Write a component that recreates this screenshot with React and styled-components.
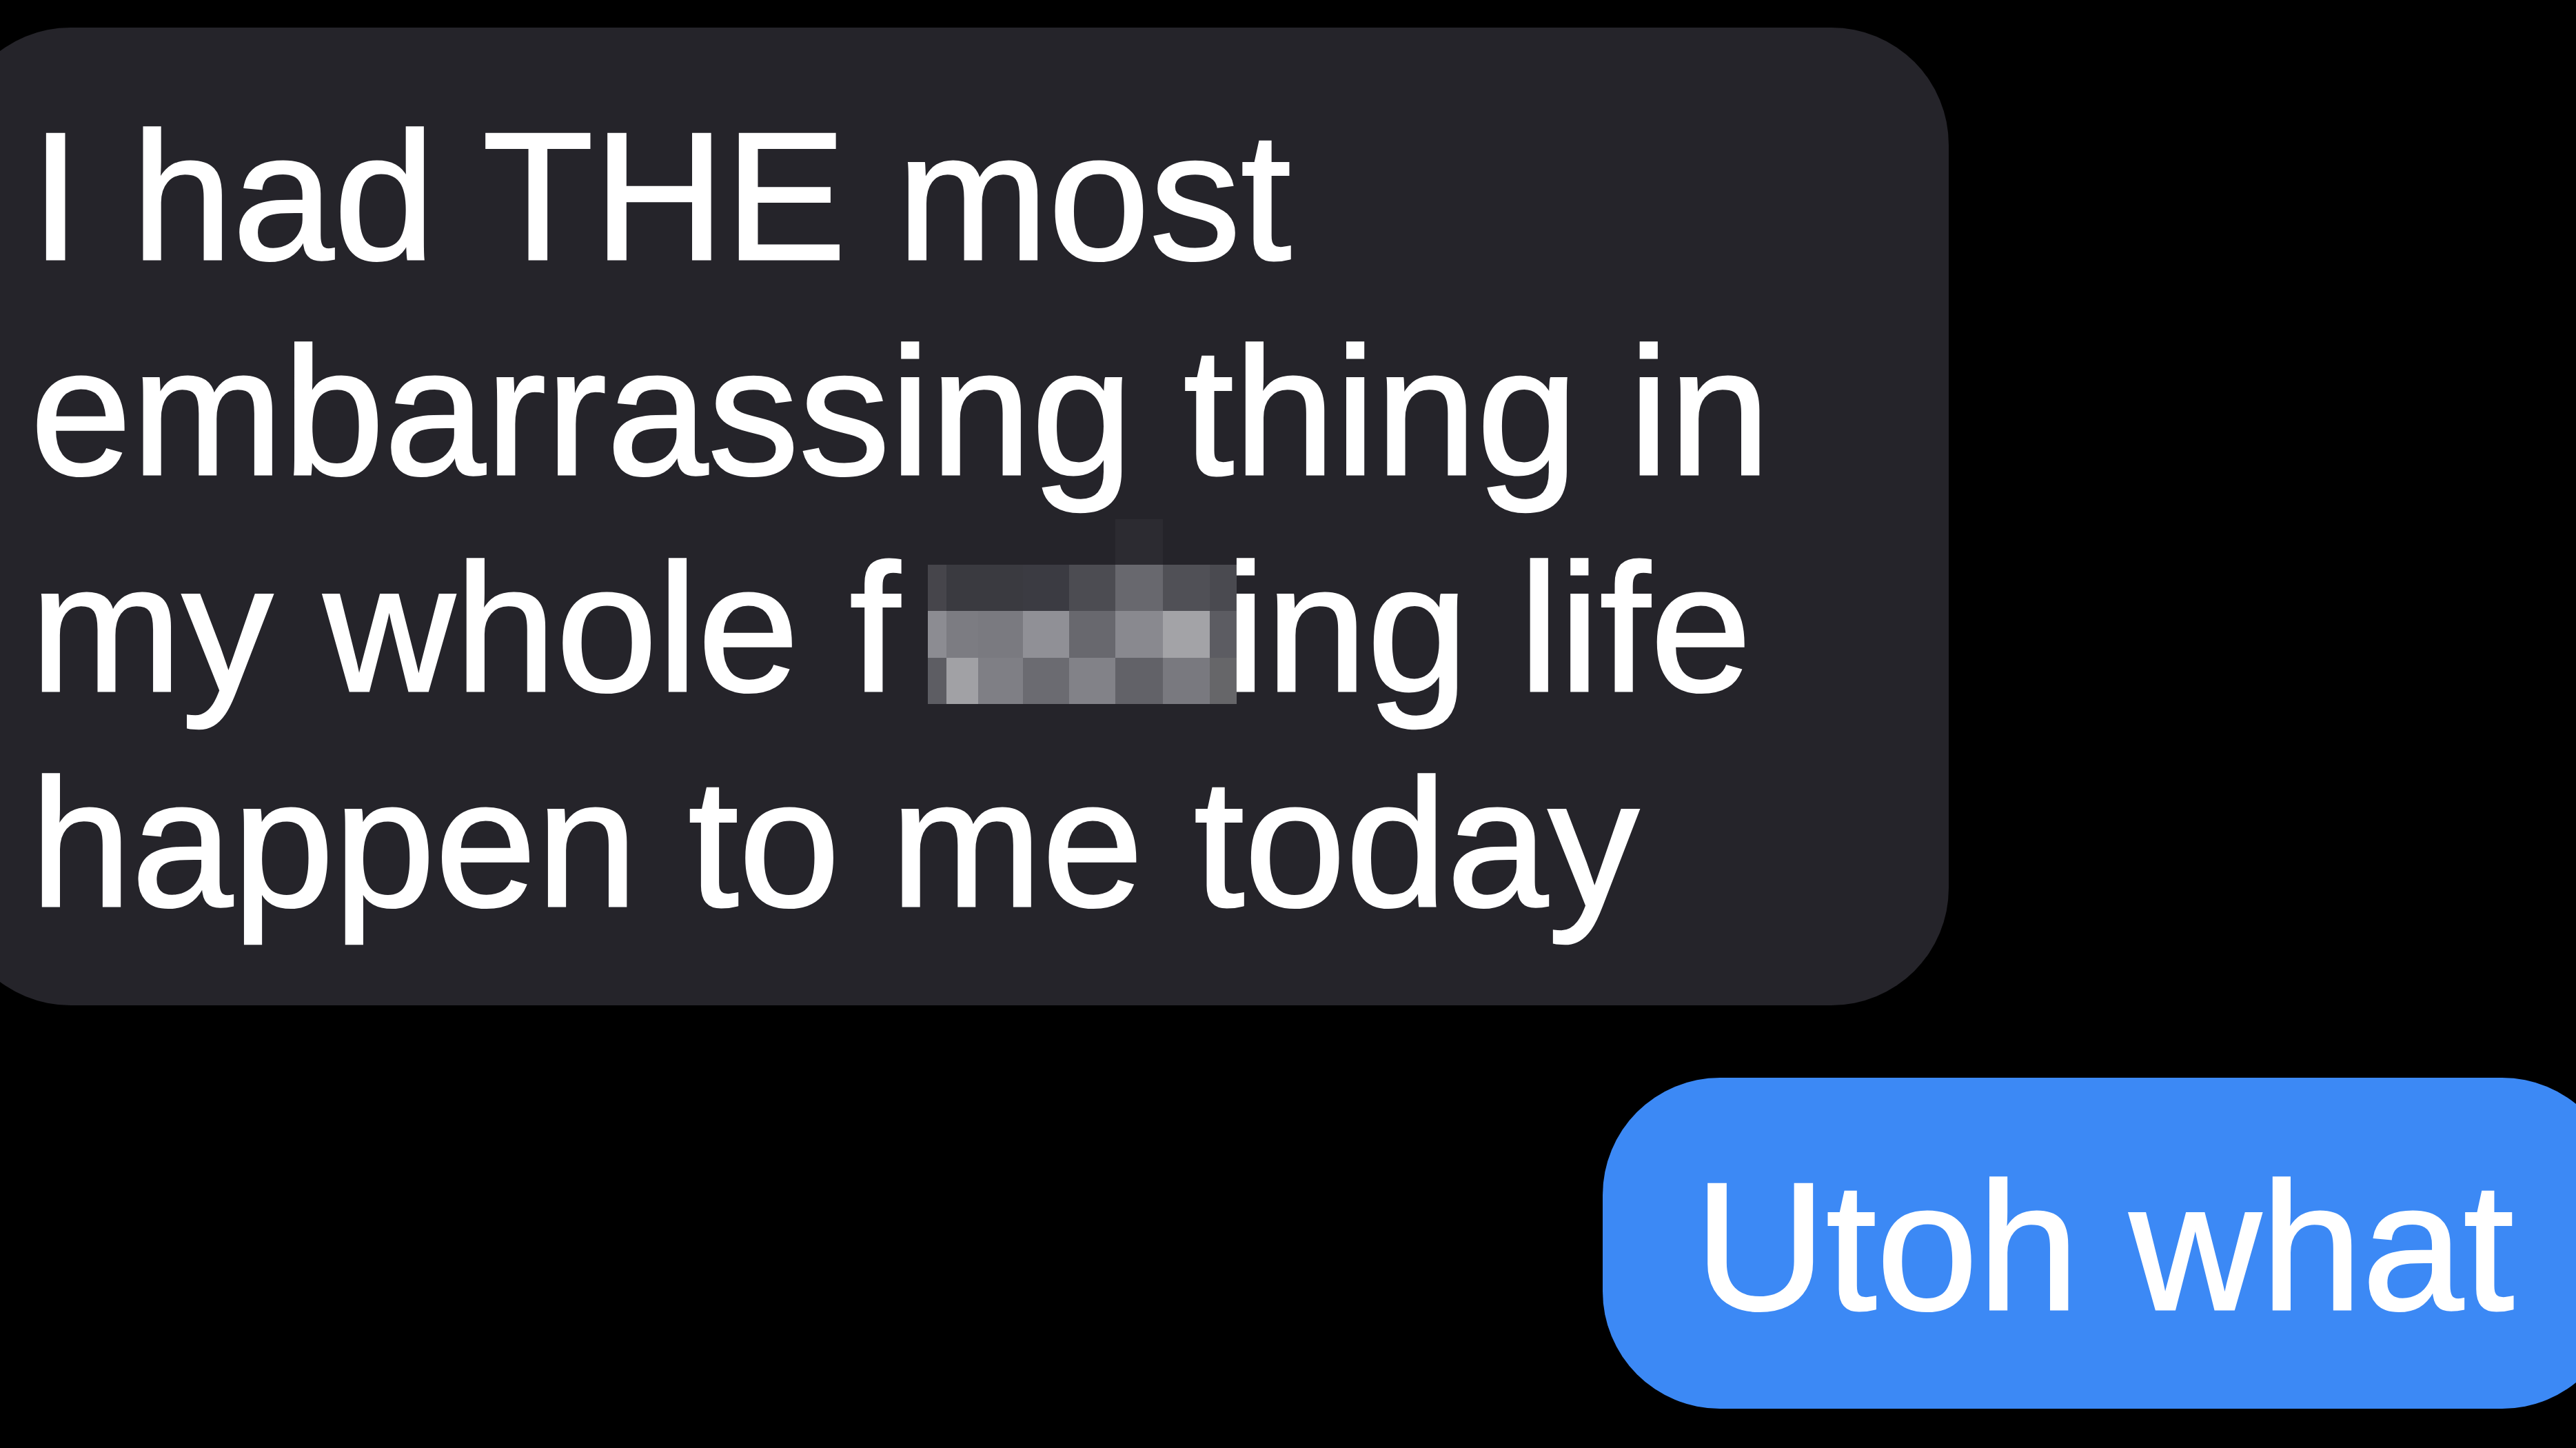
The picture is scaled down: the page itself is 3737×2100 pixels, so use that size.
import React from "react";
import styled, { createGlobalStyle } from "styled-components";

const GlobalStyle = createGlobalStyle`
  html, body {
    margin: 0;
    padding: 0;
    background: #000;
    overflow: hidden;
  }
  body {
    font-family: "Liberation Sans", Arial, Helvetica, sans-serif;
  }
`;

const Screen = styled.main`
  box-sizing: border-box;
  width: 3737px;
  height: 2100px;
  overflow: hidden;
  background: #000;
  display: flex;
  flex-direction: column;
  gap: 105px;
  padding-top: 40px;
`;

const Bubble = styled.div`
  box-sizing: border-box;
  border-radius: 170px;
  color: #fff;
  font-size: 264px;
  line-height: 312px;
  white-space: nowrap;
  -webkit-text-stroke: 3px #fff;
  ${({ $sent }) =>
    $sent
      ? `
    align-self: flex-end;
    margin-right: -63px;
    background: #3c89f5;
    padding: 89px 153px 79px 133px;
  `
      : `
    align-self: flex-start;
    margin-left: -68px;
    width: 2895px;
    background: #25242a;
    padding: 89px 0 79px 112px;
  `}
`;

const Censor = styled.span`
  display: inline-block;
  overflow: hidden;
  width: 448px;
  height: 268px;
  line-height: 0;
  vertical-align: -19px;
  margin: 0 -16px 0 40px;
  -webkit-text-stroke: 0;
`;

const PixelGrid = styled.span`
  display: grid;
  grid-template-columns: 27px 46px 65px 67px 67px 69px 68px 39px;
  grid-template-rows: 66px 67px 68px 67px;
  width: 448px;
  height: 268px;
`;

const Pixel = styled.span`
  display: block;
  background: ${({ $c }) => $c};
`;

const pixelRows = [
  ["transparent", "transparent", "transparent", "transparent", "transparent", "#2c2b31", "transparent", "transparent"],
  ["#46454b", "#3a3a40", "#3a3a40", "#3b3b42", "#4c4c52", "#68686e", "#505056", "#4a4a50"],
  ["#8c8c92", "#7c7c82", "#7a7a80", "#909096", "#68686e", "#89898f", "#a3a3a7", "#5c5c62"],
  ["#5d5d63", "#a1a1a5", "#7f7f85", "#6b6b71", "#828288", "#626268", "#79797f", "#666669"],
];

function PixelCensor() {
  return (
    <Censor aria-label="censored">
      <PixelGrid>
        {pixelRows.flatMap((row, r) =>
          row.map((c, i) => <Pixel key={`${r}-${i}`} $c={c} />)
        )}
      </PixelGrid>
    </Censor>
  );
}

export default function App() {
  return (
    <>
      <GlobalStyle />
      <Screen>
        <Bubble>
          I had THE most
          <br />
          embarrassing thing in
          <br />
          my whole f
          <PixelCensor />
          ing life
          <br />
          happen to me today
        </Bubble>
        <Bubble $sent>Utoh what</Bubble>
      </Screen>
    </>
  );
}
